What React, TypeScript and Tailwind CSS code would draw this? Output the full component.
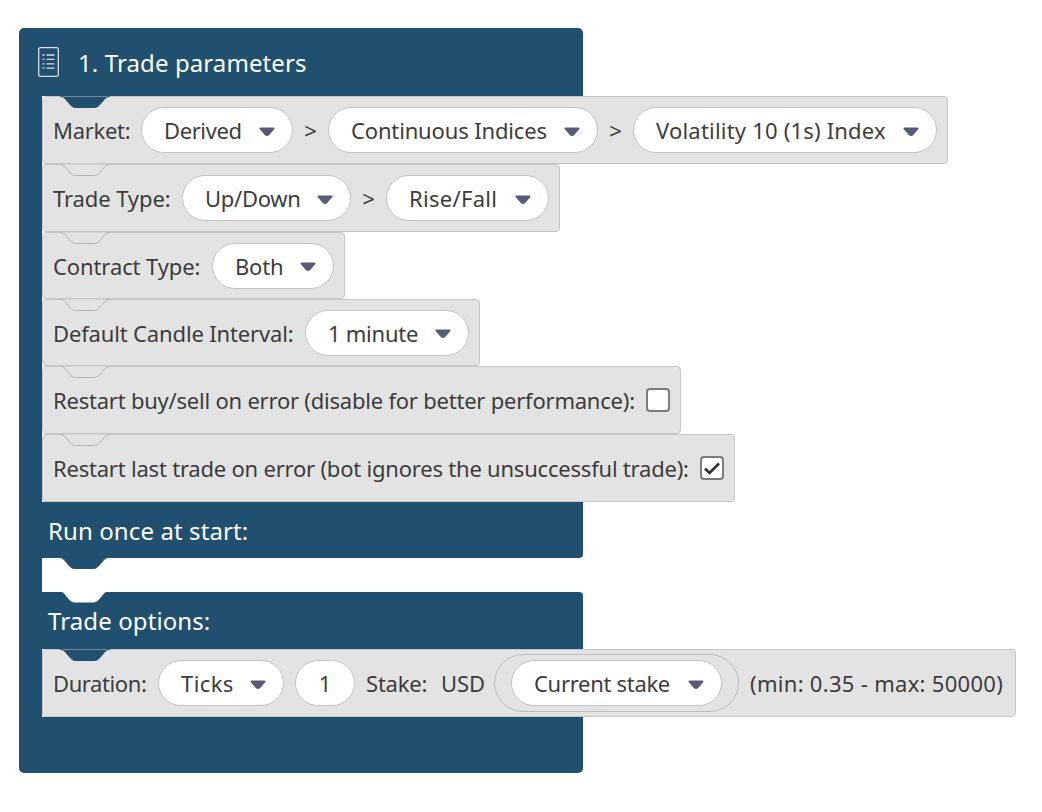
import type { ReactNode } from 'react'

const BLUE = '#204f6f'
const NOTCH = 'M0 0.5 C2 0.5 3.5 1 5 2.5 L10.5 9 C12 10.5 13.5 11.5 15.5 11.5 L34.5 11.5 C36.5 11.5 38 10.5 39.5 9 L45 2.5 C46.5 1 48 0.5 50 0.5'

function Notch({ fill, line }: { fill: string; line: string }) {
  return (
    <svg className="absolute left-[17px] top-[-1px]" width="50" height="13" viewBox="0 0 50 13" fill="none">
      <path d={`${NOTCH} Z`} fill={fill} />
      <path d={NOTCH} stroke={line} />
    </svg>
  )
}

function Caret() {
  return (
    <svg width="16" height="10" viewBox="0 0 16 10" className="shrink-0 mt-[3px]">
      <path d="M1.5 0.5 H14.5 Q16 0.5 15.4 2 L10 8.2 Q8 9.8 6 8.2 L0.6 2 Q0 0.5 1.5 0.5 Z" fill="#575b78" />
    </svg>
  )
}

function Pill({ label, width, tracking = '' }: { label: string; width: string; tracking?: string }) {
  return (
    <div className={`${width} h-[46px] shrink-0 rounded-full bg-white border border-[#c4c4c4] flex items-center justify-between pl-[22px] pr-[17px]`}>
      <span className={`whitespace-nowrap ${tracking}`}>{label}</span>
      <Caret />
    </div>
  )
}

function Label({ text, width, tracking = '' }: { text: string; width: string; tracking?: string }) {
  return <span className={`${width} shrink-0 whitespace-nowrap ${tracking}`}>{text}</span>
}

function Sep() {
  return <span className="w-[35px] shrink-0 text-center">&gt;</span>
}

function Row({ width, height, dark, children }: { width: string; height: string; dark?: boolean; children: ReactNode }) {
  return (
    <div className={`relative ${width} ${height} flex items-center pl-[10px] bg-[#e3e3e3] border border-[#c6c6c6] rounded-[4px] text-[#3c3c3c]`}>
      <Notch fill={dark ? BLUE : '#e3e3e3'} line={dark ? BLUE : '#b4b4b4'} />
      {children}
    </div>
  )
}

function Checkbox({ checked }: { checked?: boolean }) {
  return (
    <div className="w-[24px] h-[24px] shrink-0 rounded-[4px] bg-white border-2 border-[#7c7c7c] flex items-center justify-center">
      {checked && (
        <svg width="18" height="14" viewBox="0 0 18 14" fill="none">
          <path d="M2 7.5 L6.5 12 L16 2.5" stroke="#2f2f2f" strokeWidth="2.6" />
        </svg>
      )}
    </div>
  )
}

function ListIcon() {
  return (
    <svg width="21" height="30" viewBox="0 0 21 30" fill="none" stroke="#d5e0e8" strokeWidth="1.3">
      <rect x="0.7" y="0.7" width="19.6" height="28.6" rx="1.5" />
      <path d="M8.5 8 H16.5 M8.5 12.3 H16.5 M8.5 16.8 H16.5 M8.5 21.2 H16.5" />
      <path d="M4.5 8 H6.5 M4.5 12.3 H6.5 M4.5 16.8 H6.5 M4.5 21.2 H6.5" />
    </svg>
  )
}

export default function App() {
  return (
    <div className="min-h-screen bg-white pt-[28px] pl-[19px] text-[22px] leading-none font-['Noto_Sans',sans-serif]">
      {/* Header */}
      <div className="w-[564px] h-[68px] bg-[#204f6f] rounded-t-[5px] flex items-center pl-[19px] gap-[19px] text-white text-[24px]">
        <ListIcon />
        <span className="pt-[2px] tracking-[0.1px]">1. Trade parameters</span>
      </div>

      {/* Parameter rows */}
      <div className="border-l-[23px] border-[#204f6f] w-max">
        <Row width="w-[906px]" height="h-[68px]" dark>
          <Label text="Market:" width="w-[88px]" tracking="tracking-[-0.3px]" />
          <Pill label="Derived" width="w-[152px]" tracking="tracking-[-0.4px]" />
          <Sep />
          <Pill label="Continuous Indices" width="w-[270px]" tracking="tracking-[-0.15px]" />
          <Sep />
          <Pill label="Volatility 10 (1s) Index" width="w-[304px]" tracking="tracking-[0.2px]" />
        </Row>
        <Row width="w-[518px]" height="h-[68px]">
          <Label text="Trade Type:" width="w-[129px]" tracking="tracking-[-0.1px]" />
          <Pill label="Up/Down" width="w-[169px]" tracking="tracking-[-0.3px]" />
          <Sep />
          <Pill label="Rise/Fall" width="w-[163px]" tracking="tracking-[0.3px]" />
        </Row>
        <Row width="w-[303px]" height="h-[67px]">
          <Label text="Contract Type:" width="w-[159px]" tracking="tracking-[-0.1px]" />
          <Pill label="Both" width="w-[122px]" tracking="tracking-[-0.2px]" />
        </Row>
        <Row width="w-[438px]" height="h-[67px]">
          <Label text="Default Candle Interval:" width="w-[252px]" tracking="tracking-[-0.15px]" />
          <Pill label="1 minute" width="w-[164px]" tracking="tracking-[-0.25px]" />
        </Row>
        <Row width="w-[639px]" height="h-[68px]">
          <Label text="Restart buy/sell on error (disable for better performance):" width="w-[593px]" tracking="tracking-[-0.22px]" />
          <Checkbox />
        </Row>
        <Row width="w-[693px]" height="h-[68px]">
          <Label text="Restart last trade on error (bot ignores the unsuccessful trade):" width="w-[647px]" tracking="tracking-[-0.21px]" />
          <Checkbox checked />
        </Row>
      </div>

      {/* Run once at start */}
      <div className="w-[564px] h-[56px] bg-[#204f6f] rounded-br-[4px] flex items-center pl-[29px] pt-[2px] text-white text-[24px] tracking-[0.1px]">
        Run once at start:
      </div>
      <div className="w-[23px] h-[34px] bg-[#204f6f] overflow-visible">
        <div className="relative ml-[23px] w-[541px] h-[34px] bg-white rounded-l-[4px]">
          <Notch fill={BLUE} line={BLUE} />
          <svg className="absolute left-[17px] bottom-[-11px]" width="50" height="12" viewBox="0 0 50 12">
            <path d={`${NOTCH} Z`} fill="#fff" />
          </svg>
        </div>
      </div>

      {/* Trade options */}
      <div className="w-[564px] h-[57px] bg-[#204f6f] rounded-tr-[4px] flex items-center pl-[29px] text-white text-[24px] tracking-[0.1px]">
        Trade options:
      </div>
      <div className="border-l-[23px] border-[#204f6f] w-max">
        <Row width="w-[974px]" height="h-[68px]" dark>
          <Label text="Duration:" width="w-[105px]" tracking="tracking-[-0.4px]" />
          <Pill label="Ticks" width="w-[126px]" tracking="tracking-[0.4px]" />
          <div className="w-[60px] h-[46px] ml-[11px] shrink-0 rounded-full bg-white border border-[#c4c4c4] flex items-center justify-center">1</div>
          <Label text="Stake:" width="w-[75px] ml-[11px]" tracking="tracking-[-0.2px]" />
          <Label text="USD" width="w-[53px]" tracking="tracking-[-0.1px]" />
          <div className="w-[245px] h-[58px] shrink-0 rounded-full border border-[#bdbdbd] flex items-center justify-center">
            <Pill label="Current stake" width="w-[211px]" tracking="tracking-[-0.3px]" />
          </div>
          <span className="ml-[11px] whitespace-nowrap tracking-[0.3px]">(min: 0.35 - max: 50000)</span>
        </Row>
      </div>

      {/* Bottom */}
      <div className="w-[564px] h-[56px] bg-[#204f6f] rounded-b-[5px]" />
    </div>
  )
}
